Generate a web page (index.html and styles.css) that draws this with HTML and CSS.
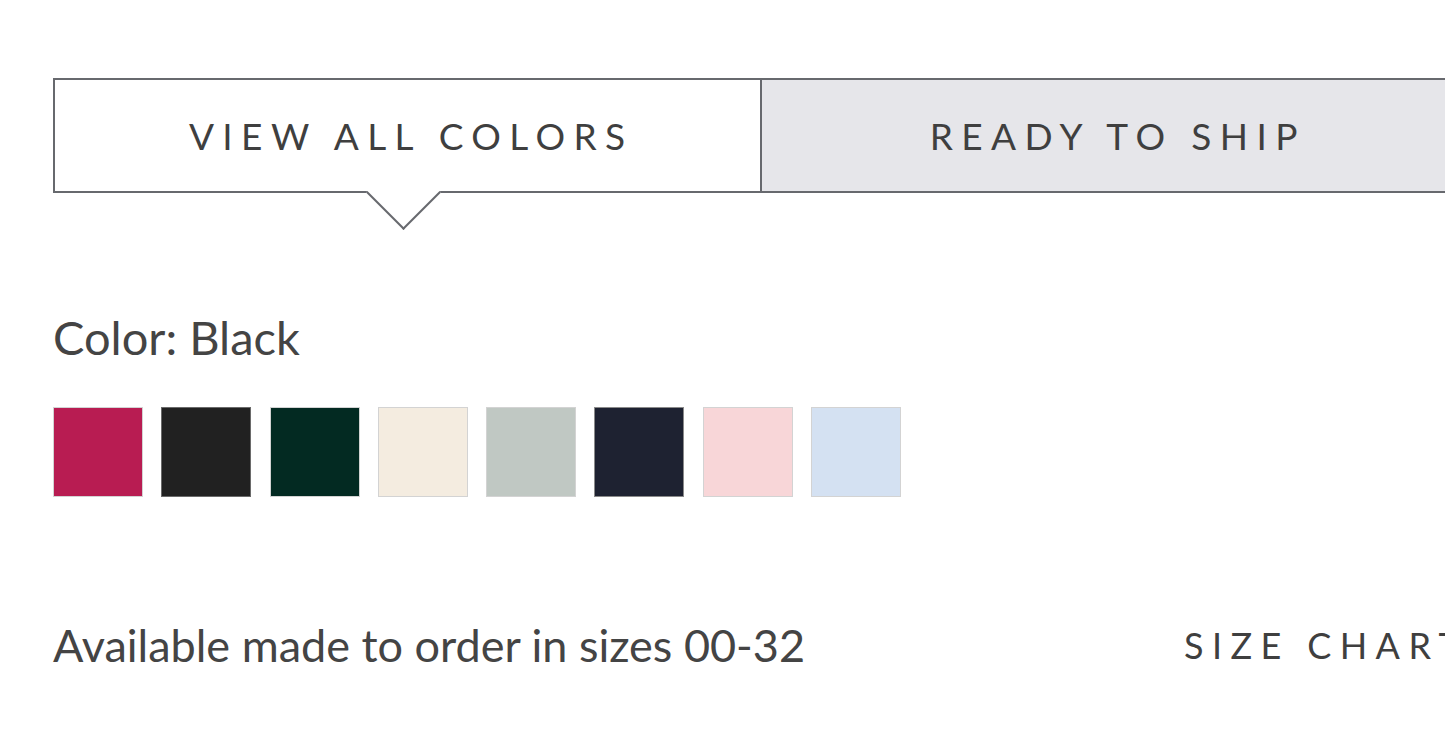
FILE: index.html
```html
<!DOCTYPE html>
<html>
<head>
<meta charset="utf-8">
<link rel="stylesheet" href="styles.css">
</head>
<body>
<div class="page">
  <div class="tabs">
    <div class="tab tab-active">VIEW ALL COLORS</div>
    <div class="tab tab-inactive">READY TO SHIP</div>
  </div>
  <div class="color-label">Color: Black</div>
  <div class="swatches">
    <div class="swatch sw-crimson"></div>
    <div class="swatch sw-black selected"></div>
    <div class="swatch sw-green"></div>
    <div class="swatch sw-ivory"></div>
    <div class="swatch sw-sage"></div>
    <div class="swatch sw-navy"></div>
    <div class="swatch sw-pink"></div>
    <div class="swatch sw-blue"></div>
  </div>
  <div class="sizes-row">
    <div class="sizes">Available made to order in sizes 00-32</div>
    <div class="size-chart">SIZE CHART</div>
  </div>
</div>
</body>
</html>
```
FILE: styles.css
```css
html, body {
  margin: 0;
  padding: 0;
  background: #fff;
  overflow: hidden;
}
.page {
  width: 1415px;
  padding: 78px 0 0 53px;
}
.tabs {
  display: flex;
  width: 1415px;
  height: 115px;
  box-sizing: border-box;
  border: 2px solid #67696e;
}
.tab {
  flex: 1;
  display: flex;
  align-items: center;
  justify-content: center;
  font-family: "Lato", "Liberation Sans", sans-serif;
  font-weight: 400;
  font-size: 37px;
  letter-spacing: 8.4px;
  color: #3f3f3f;
  position: relative;
  padding-left: 8px;
}
.tab-active {
  background: #fff;
}
.tab-active::after {
  content: "";
  position: absolute;
  width: 51px;
  height: 51px;
  left: 322px;
  bottom: -28px;
  background: #fff;
  border-right: 2px solid #67696e;
  border-bottom: 2px solid #67696e;
  transform: rotate(45deg);
}
.tab-inactive {
  background: #e6e6ea;
  border-left: 2px solid #67696e;
}
.color-label {
  margin-top: 116px;
  font-family: "Lato", "Liberation Sans", sans-serif;
  font-size: 47px;
  color: #444;
  line-height: 56px;
}
.swatches {
  display: flex;
  gap: 18.3px;
  margin-top: 42px;
}
.swatch {
  width: 88px;
  height: 88px;
  border: 1px solid #d3d3d3;
}
.sw-crimson { background: #b81c52; }
.sw-black { background: #212121; }
.sw-black.selected { border-color: #6a6a6a; }
.sw-green { background: #032a22; }
.sw-ivory { background: #f4ece0; }
.sw-sage { background: #c0c8c3; }
.sw-navy { background: #1e2231; border-color: #8a8a8a; }
.sw-pink { background: #f8d6d8; }
.sw-blue { background: #d4e1f2; }
.sizes-row {
  display: flex;
  align-items: center;
  margin-top: 120px;
}
.sizes {
  font-family: "Lato", "Liberation Sans", sans-serif;
  font-size: 45px;
  color: #444;
  line-height: 56px;
}
.size-chart {
  margin-left: auto;
  margin-right: -16px;
  width: 300px;
  font-family: "Lato", "Liberation Sans", sans-serif;
  font-weight: 400;
  font-size: 36px;
  letter-spacing: 8.4px;
  color: #3f3f3f;
  white-space: nowrap;
}
```
